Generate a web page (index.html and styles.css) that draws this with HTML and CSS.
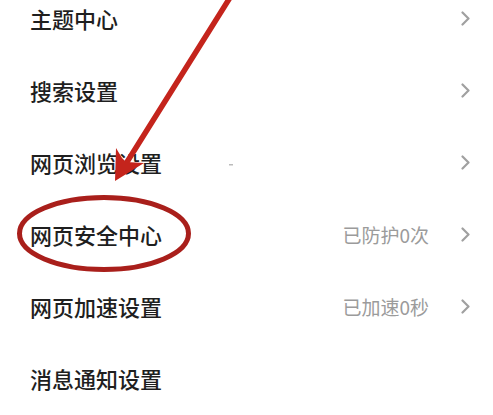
FILE: index.html
```html
<!DOCTYPE html>
<html lang="zh-CN">
<head>
<meta charset="utf-8">
<title>设置</title>
<link rel="stylesheet" href="styles.css">
</head>
<body>
<div class="page">
  <ul class="menu">
    <li class="row"><span class="label">主题中心</span><svg class="chev" viewBox="0 0 9 15"><path d="M1.5 1.5 L7.5 7.5 L1.5 13.5"/></svg></li>
    <li class="row"><span class="label">搜索设置</span><svg class="chev" viewBox="0 0 9 15"><path d="M1.5 1.5 L7.5 7.5 L1.5 13.5"/></svg></li>
    <li class="row"><span class="label">网页浏览设置</span><svg class="chev" viewBox="0 0 9 15"><path d="M1.5 1.5 L7.5 7.5 L1.5 13.5"/></svg></li>
    <li class="row"><span class="label">网页安全中心</span><span class="value">已防护0次</span><svg class="chev" viewBox="0 0 9 15"><path d="M1.5 1.5 L7.5 7.5 L1.5 13.5"/></svg></li>
    <li class="row"><span class="label">网页加速设置</span><span class="value">已加速0秒</span><svg class="chev" viewBox="0 0 9 15"><path d="M1.5 1.5 L7.5 7.5 L1.5 13.5"/></svg></li>
    <li class="row"><span class="label">消息通知设置</span></li>
  </ul>
  <svg class="annot" viewBox="0 0 493 415" width="493" height="415">
    <rect x="229" y="164" width="4" height="1.5" fill="#bbb"/>
    <ellipse cx="104" cy="233.5" rx="84.5" ry="36" fill="none" stroke="#a91f1b" stroke-width="5"/>
    <line x1="231" y1="-4" x2="122" y2="170" stroke="#c4241c" stroke-width="5.5" stroke-linecap="round"/>
    <polygon points="115,181 116,148 122,158 126,162 144,163" fill="#c4241c"/>
  </svg>
</div>
</body>
</html>
```

FILE: styles.css
```css
html, body {
  margin: 0;
  padding: 0;
  background: #ffffff;
}

.page {
  position: relative;
  width: 493px;
  height: 415px;
  overflow: hidden;
  font-family: "Noto Sans CJK SC", "Noto Sans", sans-serif;
}

.menu {
  list-style: none;
  margin: -18px 0 0 0;
  padding: 0;
}

.row {
  display: flex;
  align-items: center;
  height: 72px;
  padding: 0 23px 0 30px;
}

.label {
  flex: 1;
  font-size: 22px;
  font-weight: 500;
  color: #1f1f1f;
  line-height: 1;
}

.value {
  font-size: 19px;
  color: #9b9b9b;
  margin-right: 32px;
  line-height: 1;
}

.chev {
  width: 9px;
  height: 15px;
  fill: none;
  stroke: #a0a0a0;
  stroke-width: 2.2;
  stroke-linecap: round;
  stroke-linejoin: round;
}

.annot {
  position: absolute;
  left: 0;
  top: 0;
  pointer-events: none;
}
```
